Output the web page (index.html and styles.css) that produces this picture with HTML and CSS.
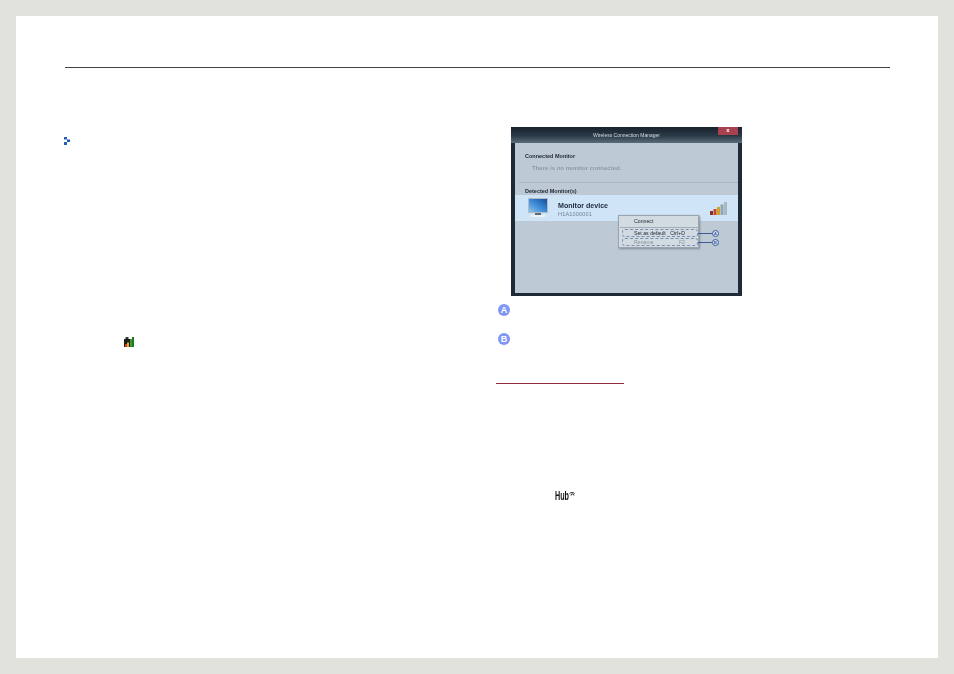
FILE: index.html
```html
<!DOCTYPE html>
<html lang="en">
<head>
    <meta charset="UTF-8">
    <title>Wireless Connection Manager</title>
    <link rel="stylesheet" href="styles.css">
</head>
<body>

<div class="sheet">
    <div class="rule"></div>
    <div class="columns">
        <div class="left">
            <svg class="bullet" width="7" height="9" viewBox="0 0 7 9">
                <path fill="#1f5fb4" d="M0 0h3v2.500h-3zM3 2.500h3v2.500h-3zM0 5h3v3h-3z"/>
            </svg>
            <svg class="signal-small" width="10" height="10" viewBox="0 0 10 10">
                <path fill="#1c1c1c" d="M0 2h6v8h-6z"/>
                <path fill="#333" d="M1.500 0h3v2h-3z"/>
                <path fill="#d33a2a" d="M1 7h2v3h-2z"/>
                <path fill="#e0b020" d="M3 5.500h2v4.500h-2z"/>
                <path fill="#3f9a2c" d="M6 2h2v8h-2z"/>
                <path fill="#1d7a1d" d="M8 0h2v10h-2z"/>
            </svg>
        </div>
        <div class="right">
            <div class="window">
                <div class="titlebar">
                    <span class="title">Wireless Connection Manager</span>
                    <span class="close">x</span>
                </div>
                <div class="content">
                    <div class="heading">Connected Monitor</div>
                    <div class="empty">There is no monitor connected.</div>
                    <div class="divider"></div>
                    <div class="heading">Detected Monitor(s)</div>
                    <div class="device">
                        <svg class="monitor" width="20" height="20" viewBox="0 0 20 20">
                            <defs>
                                <linearGradient id="screen" x1="0" y1="1" x2="1" y2="0">
                                    <stop offset="0" stop-color="#8fc1ea"/>
                                    <stop offset="0.5" stop-color="#3a8ad6"/>
                                    <stop offset="1" stop-color="#164d94"/>
                                </linearGradient>
                            </defs>
                            <path fill="#aebdc9" d="M0 0h20v15h-20z"/>
                            <path fill="url(#screen)" d="M1 1h18v13h-18z"/>
                            <path fill="#5f6b74" d="M7 15h6v2h-6z"/>
                            <path fill="#edf1f3" d="M3 17h14v2h-14z"/>
                        </svg>
                        <div class="device-text">
                            <div class="device-name">Monitor device</div>
                            <div class="device-id">H1A1000001</div>
                        </div>
                        <svg class="signal" width="17" height="13" viewBox="0 0 17 13">
                            <path fill="#8c2f26" d="M0 9h3v4h-3z"/>
                            <path fill="#c0472c" d="M3.500 7h3v6h-3z"/>
                            <path fill="#cfa226" d="M7 5h3v8h-3z"/>
                            <path fill="#93a5ae" d="M10.500 2.500h3v10.500h-3z"/>
                            <path fill="#a9b8c1" d="M14 0h3v13h-3z"/>
                        </svg>
                    </div>
                    <div class="menu">
                        <div class="menu-item">Connect</div>
                        <div class="menu-sep"></div>
                        <div class="menu-box"><span>Set as default</span><span>Ctrl+D</span></div>
                        <div class="menu-box off"><span>Rename</span><span>F2</span></div>
                        <div class="callout first"><i>A</i></div>
                        <div class="callout second"><i>B</i></div>
                    </div>
                </div>
            </div>
            <div class="badge first-badge">A</div>
            <div class="badge">B</div>
            <div class="red-line"></div>
            <div class="hub"><span class="hub-word">Hub</span><svg width="6" height="6" viewBox="0 0 6 6"><path fill="none" stroke="#222" d="M0.500 2.500a3 2 0 0 1 5 0M2 4.500a1.500 1.500 0 0 1 3 0"/></svg></div>
        </div>
    </div>
</div>

</body>
</html>
```

FILE: styles.css
```css
* {
    margin: 0;
    padding: 0;
    box-sizing: border-box;
}

body {
    background: #e2e2dd;
    padding: 16px;
    height: 674px;
    overflow: hidden;
    font-family: "Liberation Sans", sans-serif;
}

.sheet {
    width: 922px;
    height: 642px;
    background: #fff;
    padding: 51px 48px 0 49px;
}

.rule {
    border-top: 1px solid #444;
}

.columns {
    display: flex;
}

.left {
    width: 431px;
    display: flex;
    flex-direction: column;
    align-items: flex-start;
}

.bullet {
    margin: 69px 0 0 -1px;
}

.signal-small {
    margin: 191px 0 0 59px;
}

.right {
    flex: 1;
}

/* window screenshot */
.window {
    width: 231px;
    height: 169px;
    margin: 59px 0 0 15px;
    display: flex;
    flex-direction: column;
    background: #1e2b36;
    filter: blur(0.45px);
}

.titlebar {
    height: 16px;
    position: relative;
    display: flex;
    justify-content: center;
    align-items: center;
    background: linear-gradient(#17222c, #2a3a47 55%, #5c6c78);
}

.title {
    font-size: 5px;
    color: #d5dde3;
}

.close {
    position: absolute;
    top: 0;
    right: 4px;
    width: 20px;
    height: 8px;
    background: #a9404f;
    color: #fff;
    font-size: 6px;
    font-weight: bold;
    line-height: 7px;
    text-align: center;
}

.content {
    position: relative;
    flex: 1;
    margin: 0 4px 3px;
    padding-top: 10px;
    background: #bdcad5;
}

.heading {
    margin-left: 10px;
    font-size: 5.5px;
    font-weight: bold;
    line-height: 7px;
    color: #1d2730;
}

.empty {
    margin: 4px 0 0 17px;
    font-size: 6px;
    font-weight: bold;
    line-height: 8px;
    color: #8b9aa3;
}

.divider {
    height: 1px;
    margin: 10px 0 5px 4px;
    background: #a9b6c0;
}

.device {
    height: 26px;
    display: flex;
    align-items: center;
    padding: 0 11px 0 13px;
    background: #cfe4f6;
}

.device-text {
    flex: 1;
    margin-left: 10px;
    padding-top: 2px;
}

.device-name {
    font-size: 7.100px;
    font-weight: bold;
    line-height: 9px;
    color: #1c2a3a;
}

.device-id {
    font-size: 5.500px;
    line-height: 6px;
    letter-spacing: 0.2px;
    color: #6d8295;
}

/* context menu */
.menu {
    position: absolute;
    left: 103px;
    top: 72px;
    width: 81px;
    height: 33px;
    padding: 2px 0 0 3px;
    background: #d3dbe2;
    border: 1px solid #9aa4ad;
    box-shadow: 1px 1px 2px #7f8b95;
    font-size: 5.200px;
    color: #1c2630;
}

.menu-item {
    height: 7px;
    line-height: 7px;
    padding-left: 12px;
}

.menu-sep {
    height: 1px;
    margin: 2px 0 1px -2px;
    background: #a3adb6;
}

.menu-box {
    height: 8px;
    margin-bottom: 1px;
    display: flex;
    justify-content: space-between;
    padding: 0 12px 0 11px;
    line-height: 6px;
    border: 1px dashed #7b8db0;
    border-radius: 3px;
}

.menu-box.off {
    color: #8a949d;
}

.callout {
    position: absolute;
    left: 79px;
    width: 14px;
    border-top: 1px solid #3a5a98;
}

.callout i {
    position: absolute;
    left: 14px;
    top: -4px;
    width: 7px;
    height: 7px;
    border: 1px solid #3a5a98;
    border-radius: 50%;
    background: #d6def0;
    color: #3a5a98;
    font-size: 4px;
    font-style: normal;
    font-weight: bold;
    line-height: 5px;
    text-align: center;
}

.callout.first {
    top: 17px;
}

.callout.second {
    top: 26px;
}

/* notes under the window */
.badge {
    width: 12px;
    height: 12px;
    margin: 17px 0 0 2px;
    border-radius: 50%;
    background: #7f96f5;
    color: #fff;
    font-size: 9px;
    font-weight: bold;
    line-height: 12px;
    text-align: center;
}

.first-badge {
    margin-top: 8px;
}

.red-line {
    width: 128px;
    height: 1px;
    margin-top: 38px;
    background: #8f2a3f;
}

.hub {
    display: flex;
    align-items: flex-start;
    margin: 106px 0 0 59px;
    font-size: 12px;
    font-weight: bold;
    line-height: 12px;
    color: #111;
}

.hub-word {
    width: 14px;
    transform: scaleX(0.6);
    transform-origin: left top;
}

.hub svg {
    margin-top: 1px;
}
```
